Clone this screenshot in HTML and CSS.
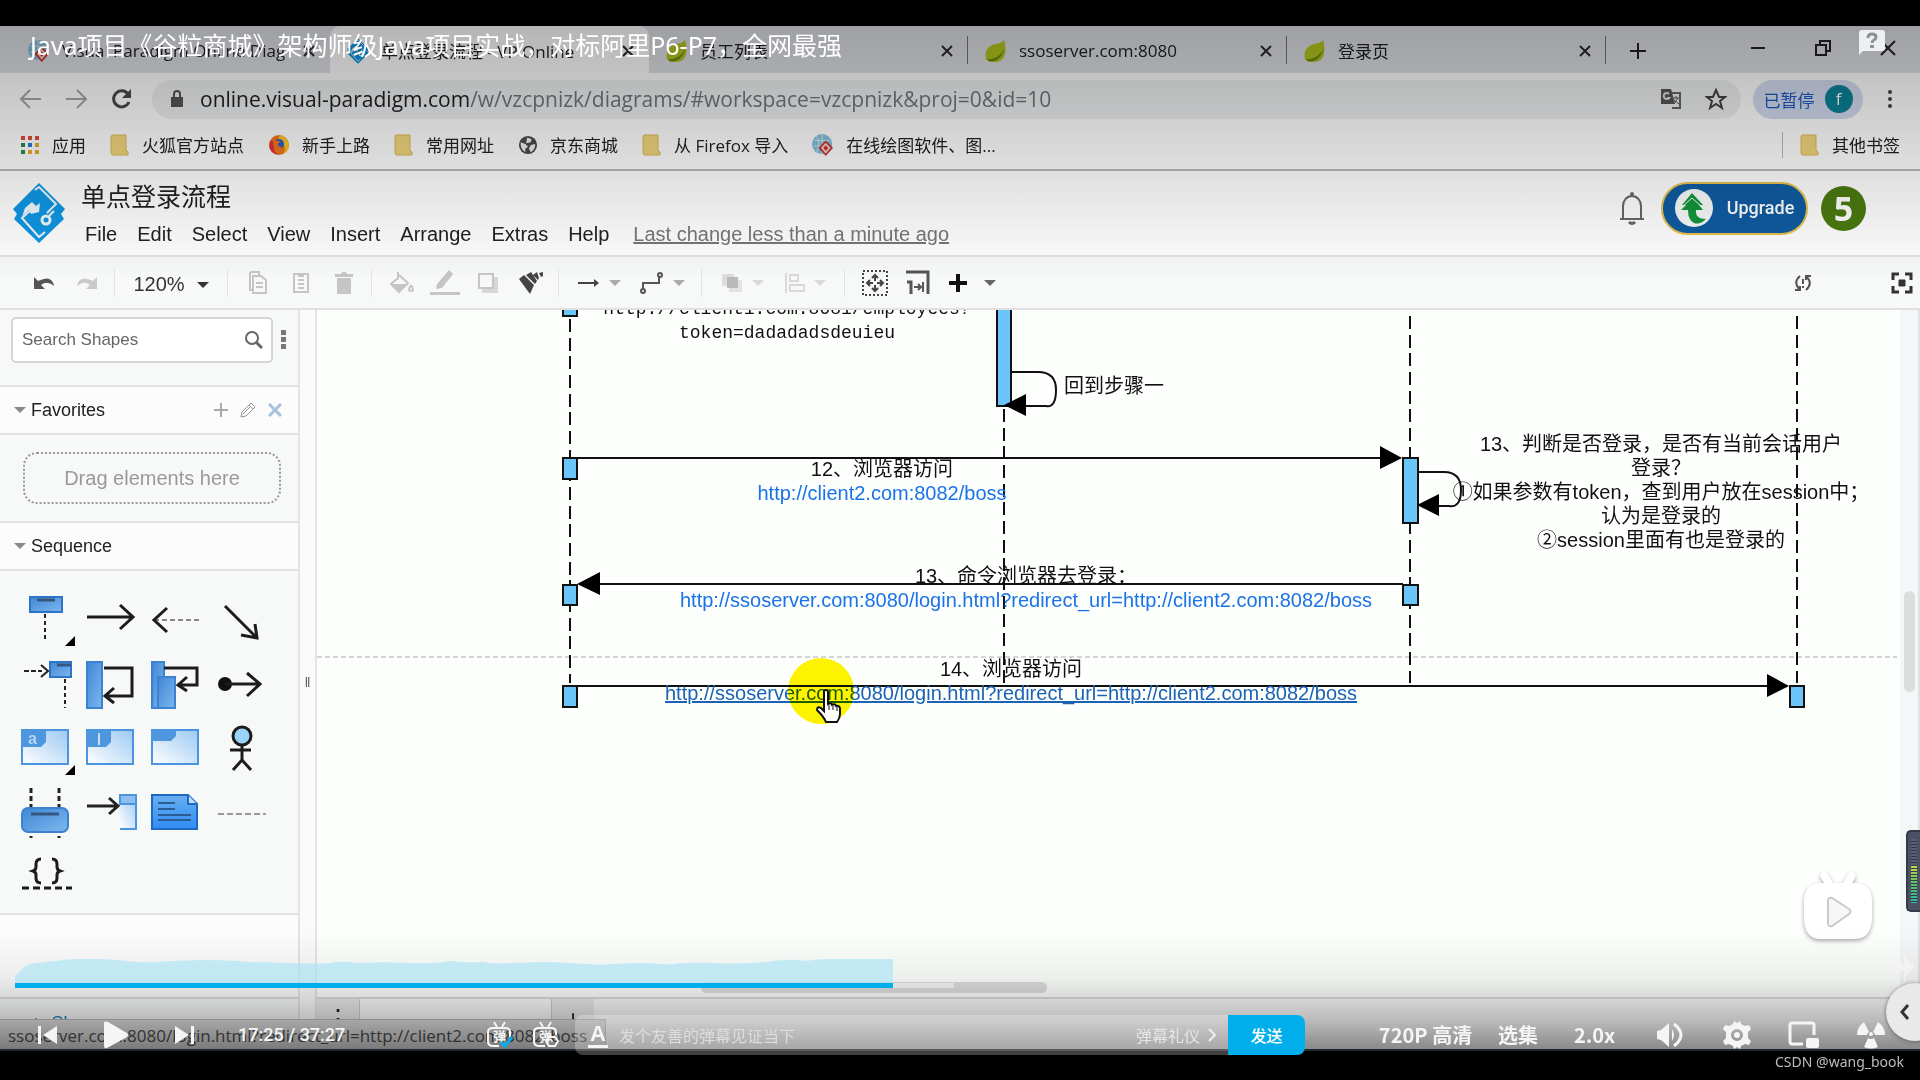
FILE: index.html
```html
<!DOCTYPE html>
<html lang="zh-CN">
<head>
<meta charset="utf-8">
<title>Java项目《谷粒商城》架构师级Java项目实战</title>
<link rel="stylesheet" href="styles.css">
</head>
<body>
<svg class="defs" width="0" height="0" aria-hidden="true">
  <defs>
    <linearGradient id="blue" x1="0" y1="0" x2="1" y2="1"><stop offset="0" stop-color="#3f86d4"/><stop offset="1" stop-color="#7db8ef"/></linearGradient>
    <linearGradient id="pale" x1="0" y1="1" x2="1" y2="0"><stop offset="0" stop-color="#fff"/><stop offset="1" stop-color="#9cc9f2"/></linearGradient>
    <linearGradient id="note" x1="0" y1="0" x2="0" y2="1"><stop offset="0" stop-color="#69aef0"/><stop offset="1" stop-color="#2f8df5"/></linearGradient>
    <symbol id="leaf" viewBox="0 0 24 26"><path d="M21 1c2 10 3 23-9 24H5l-4-3C-1 10 6 6 13 5c4 0 6-2 8-4z" fill="#b4c61c"/><path d="M2 22c9 0 15-4 19-11-3 10-9 14-17 13z" fill="#6a8c10"/></symbol>
    <symbol id="folder" viewBox="0 0 20 22"><path d="M1 3q0-2 2-2h13v15l2 2v3H3q-2 0-2-2z" fill="#f2d67c" stroke="#dcb956"/></symbol>
    <symbol id="vp" viewBox="0 0 24 26"><circle cx="11" cy="12" r="11" fill="#86bfdc"/><path d="M3 8h16M2 14h18M11 1v22M5 3q5 9 0 18" stroke="#d8ecf5" fill="none"/><path d="M15 8l8 8-8 9-8-9z" fill="#c9302c"/><path d="M15 12l4 4-4 5-4-5z" fill="none" stroke="#f5d0cd" stroke-width="2"/></symbol>
    <symbol id="diamond" viewBox="0 0 52 60"><path d="M26 0l26 26-4 5 3 5-25 24L1 36l3-5-4-5z" fill="#0f97e4"/><path d="M22 7l4-3 17 17-9 9M20 25L9 35l17 19 6-5" fill="none" stroke="#eef7fc" stroke-width="2"/><path d="M12 25l7-6 4 4 4-3-1 9-8 2-2-4-7 7" fill="#eef7fc"/><circle cx="33" cy="37" r="4" fill="none" stroke="#eef7fc" stroke-width="3"/><path d="M36 33l5-5" stroke="#eef7fc" stroke-width="2"/></symbol>
    <symbol id="close" viewBox="0 0 16 16"><path d="M3 3l10 10M13 3L3 13" stroke="#2b2b2b" stroke-width="2"/></symbol>
    <symbol id="caret" viewBox="0 0 12 8"><path d="M0 1h12L6 7z" fill="currentColor"/></symbol>
  </defs>
</svg>

<main class="player">
  <section class="screen">
    <nav class="tabs" aria-label="Tabs">
      <div class="tab"><svg class="fav"><use href="#vp"/></svg><span>Visual Paradigm Online Diag</span><button aria-label="Close tab"><svg width="16" height="16"><use href="#close"/></svg></button></div>
      <div class="tab active"><svg class="fav"><use href="#diamond"/></svg><span>单点登录流程 - VP Online</span><button aria-label="Close tab"><svg width="16" height="16"><use href="#close"/></svg></button></div>
      <div class="tab lined"><svg class="fav"><use href="#leaf"/></svg><span>员工列表</span><button aria-label="Close tab"><svg width="16" height="16"><use href="#close"/></svg></button></div>
      <div class="tab lined"><svg class="fav"><use href="#leaf"/></svg><span>ssoserver.com:8080</span><button aria-label="Close tab"><svg width="16" height="16"><use href="#close"/></svg></button></div>
      <div class="tab lined"><svg class="fav"><use href="#leaf"/></svg><span>登录页</span><button aria-label="Close tab"><svg width="16" height="16"><use href="#close"/></svg></button></div>
      <button class="newtab" aria-label="New tab"><svg width="18" height="18"><path d="M9 1v16M1 9h16" stroke="#222" stroke-width="2"/></svg></button>
      <div class="winbtns">
        <button aria-label="Minimize"><svg width="16" height="16"><path d="M1 8h14" stroke="#222" stroke-width="2"/></svg></button>
        <button aria-label="Restore"><svg width="16" height="16"><path d="M1 5h10v10H1zM5 5V1h10v10h-4" fill="none" stroke="#222" stroke-width="2"/></svg></button>
        <button aria-label="Close"><svg width="16" height="16"><path d="M1 1l14 14M15 1L1 15" stroke="#222" stroke-width="2"/></svg></button>
      </div>
    </nav>

    <div class="address">
      <button class="nav" aria-label="Back"><svg width="22" height="20"><path d="M21 10H2M10 1l-9 9 9 9" fill="none" stroke="#a6a7a6" stroke-width="2"/></svg></button>
      <button class="nav" aria-label="Forward"><svg width="22" height="20"><path d="M1 10h19M12 1l9 9-9 9" fill="none" stroke="#a6a7a6" stroke-width="2"/></svg></button>
      <button class="nav" aria-label="Reload"><svg width="22" height="22"><path d="M18 6a8 8 0 1 0 1 8" fill="none" stroke="#4a4a4a" stroke-width="3"/><path d="M21 1v9h-9z" fill="#4a4a4a"/></svg></button>
      <div class="omnibox">
        <svg width="14" height="18"><path d="M1 7h12v10H1z" fill="#555"/><path d="M4 8V4a3 3 0 0 1 6 0v4" fill="none" stroke="#555" stroke-width="2"/></svg>
        <span class="url">online.visual-paradigm.com<i>/w/vzcpnizk/diagrams/#workspace=vzcpnizk&amp;proj=0&amp;id=10</i></span>
        <button aria-label="Translate"><svg width="22" height="22"><path d="M9 5h11v15h-8" fill="none" stroke="#666" stroke-width="2"/><path d="M1 1h10l4 15H1z" fill="#555"/><path d="M9 6a3 3 0 1 0 0 4H7" fill="none" stroke="#ddd" stroke-width="2"/><path d="M13 10h6M16 8v2M18 10l-4 6M14 12l5 4" stroke="#555" fill="none"/></svg></button>
        <button aria-label="Bookmark"><svg width="22" height="22"><path d="M11 2l3 7h6l-5 4 2 7-6-4-6 4 2-7-5-4h6z" fill="none" stroke="#444" stroke-width="2"/></svg></button>
      </div>
      <button class="profile">已暂停<b>f</b></button>
      <button class="kebab" aria-label="Menu"><svg width="6" height="20"><circle cx="3" cy="3" r="2" fill="#444"/><circle cx="3" cy="10" r="2" fill="#444"/><circle cx="3" cy="17" r="2" fill="#444"/></svg></button>
    </div>

    <nav class="bookmarks" aria-label="Bookmarks">
      <a href="#"><svg viewBox="0 0 20 20" width="20" height="20"><path d="M1 1h4v4H1zM8 1h4v4H8zM15 1h4v4h-4z" fill="#e04a3c"/><path d="M1 8h4v4H1z" fill="#2d8b4c"/><path d="M8 8h4v4H8z" fill="#2a77d4"/><path d="M15 8h4v4h-4zM8 15h4v4H8zM15 15h4v4h-4z" fill="#e3ab2a"/><path d="M1 15h4v4H1z" fill="#2d8b4c"/></svg>应用</a>
      <a href="#"><svg width="20" height="22"><use href="#folder"/></svg>火狐官方站点</a>
      <a href="#"><svg viewBox="0 0 22 22" width="22" height="22"><circle cx="11" cy="11" r="10" fill="#f5751c"/><path d="M12 1q9 3 9 11-1 6-6 8 5-7-2-11-4-4-1-8z" fill="#fbc92e"/><path d="M2 7q-3 12 9 14-6-3-5-8l-1-6z" fill="#e5303f"/><circle cx="11" cy="10" r="5" fill="#2b5fc4"/><path d="M5 8q4-3 8 0-3 0-3 3 2 3 5 2-5 5-9 0z" fill="#f5751c"/></svg>新手上路</a>
      <a href="#"><svg width="20" height="22"><use href="#folder"/></svg>常用网址</a>
      <a href="#"><svg viewBox="0 0 22 22" width="20" height="20"><circle cx="11" cy="11" r="10" fill="#4a4b4b"/><path d="M3 8l5 2 3 3-3 2v4q-6-4-5-11zM10 3q3 0 5 2l-1 3-5 1zM14 11l5-1q0 6-5 9l-2-4z" fill="#f0f1f0"/></svg>京东商城</a>
      <a href="#"><svg width="20" height="22"><use href="#folder"/></svg>从 Firefox 导入</a>
      <a href="#"><svg width="22" height="24"><use href="#vp"/></svg>在线绘图软件、图...</a>
      <a href="#" class="other"><svg width="20" height="22"><use href="#folder"/></svg>其他书签</a>
    </nav>

    <header class="app">
      <svg class="logo"><use href="#diamond"/></svg>
      <div class="names">
        <h1>单点登录流程</h1>
        <nav class="menu" aria-label="Menu"><a href="#">File</a><a href="#">Edit</a><a href="#">Select</a><a href="#">View</a><a href="#">Insert</a><a href="#">Arrange</a><a href="#">Extras</a><a href="#">Help</a><a href="#" class="last">Last change less than a minute ago</a></nav>
      </div>
      <div class="account">
        <button aria-label="Notifications"><svg width="28" height="34" fill="none" stroke="#666" stroke-width="2"><path d="M2 28h24M5 28V15a9 10 0 0 1 18 0v13"/><path d="M11 31q3 3 6 0" stroke-width="3"/><circle cx="14" cy="3" r="1"/></svg></button>
        <button class="upgrade"><svg width="38" height="40"><ellipse cx="19" cy="20" rx="19" ry="19" fill="#f8faf9"/><path d="M17 5l11 12h-4l4 5h-7q-1 9 10 9-6 6-12 4-6-3-6-13H6l5-5H7z" fill="#14953b"/><path d="M8 18l9-8 9 8" stroke="#f4f7f5" fill="none"/></svg>Upgrade</button>
        <button class="avatar">5</button>
      </div>
    </header>

    <div class="toolbar">
      <div class="grp g1">
        <button aria-label="Undo"><svg width="22" height="16"><path d="M1 2v12h11L8 10q6-5 13 1-2-12-16-5z" fill="#555"/></svg></button>
        <button aria-label="Redo"><svg width="22" height="16"><path d="M21 2v12H10l4-4Q8 5 1 11 3-1 17 6z" fill="#c9cac9"/></svg></button>
      </div>
      <div class="grp zoom"><button>120% <svg width="12" height="8"><use href="#caret"/></svg></button></div>
      <div class="grp dim">
        <button aria-label="Copy"><svg width="20" height="24" fill="none" stroke="currentColor" stroke-width="2"><path d="M2 1h9v3M2 1v18h3M5 5h8l5 4v13H5zM8 12h7M8 16h7"/></svg></button>
        <button aria-label="Paste"><svg width="18" height="22" fill="none" stroke="currentColor" stroke-width="2"><path d="M2 2h14v18H2zM6 8h6M6 12h6M6 16h6"/><path d="M6 3h6" stroke-width="4"/></svg></button>
        <button aria-label="Delete"><svg width="20" height="24" fill="currentColor"><path d="M1 3h6l1-2h4l1 2h6v3H1zM3 7h14v16H3z"/></svg></button>
      </div>
      <div class="grp dim">
        <button aria-label="Fill colour"><svg width="24" height="24"><path d="M8 1v6l-7 6 8 8 9-9-9-8M21 14q4 6 0 6t0-6" fill="none" stroke="currentColor" stroke-width="2"/><path d="M2 13h15l-8 8z" fill="currentColor"/></svg></button>
        <button aria-label="Line colour"><svg width="30" height="28"><path d="M7 15L19 1l4 4-11 14-6 1zM0 23h30v3H0z" fill="currentColor"/></svg></button>
        <button aria-label="Shadow"><svg width="22" height="22"><path d="M5 5h16v16H5z" fill="#d6d7d6"/><path d="M2 2h14v14H2z" fill="#f7f8f8" stroke="currentColor" stroke-width="2"/></svg></button>
        <button aria-label="Format painter"><svg width="26" height="24"><path d="M1 8l5-4 10 10-4 9zM8 4l5-3 6 9-2 3zM15 4l4-3 2 6-1 2zM21 2l4-1v4l-2 1z" fill="#444"/></svg></button>
      </div>
      <div class="grp pair mid">
        <button aria-label="Connection"><svg width="22" height="12"><path d="M0 6h17" stroke="#444" stroke-width="2"/><path d="M16 2l5 4-5 4z" fill="#444"/></svg><svg width="12" height="8"><use href="#caret"/></svg></button>
        <button aria-label="Waypoints"><svg width="24" height="22" fill="none" stroke="#555" stroke-width="2"><path d="M3 17v-6h16V5"/><circle cx="3" cy="19" r="2"/><circle cx="20" cy="3" r="2"/></svg><svg width="12" height="8"><use href="#caret"/></svg></button>
      </div>
      <div class="grp pair pale">
        <button aria-label="To front"><svg width="22" height="20"><path d="M1 1h12v12H1z" fill="#dcdddc"/><path d="M8 7h13v12H8z" fill="#e2e3e2"/><path d="M6 4h11v11H6z" fill="#b9bab9"/></svg><svg width="12" height="8"><use href="#caret"/></svg></button>
        <button aria-label="Align"><svg width="20" height="20" fill="none" stroke="currentColor" stroke-width="2"><path d="M1 0v20M5 2h8v6H5zM5 12h14v6H5z"/></svg><svg width="12" height="8"><use href="#caret"/></svg></button>
      </div>
      <div class="grp last">
        <button aria-label="Fit"><svg width="26" height="26" fill="none" stroke="#444" stroke-width="2"><path d="M1 1h24v24H1z" stroke-dasharray="2 2"/><path d="M13 5v6M13 15v6M5 13h6M15 13h6M10 8l3-3 3 3M10 18l3 3 3-3M8 10l-3 3 3 3M18 10l3 3-3 3"/></svg></button>
        <button aria-label="Page view"><svg width="24" height="26" fill="none" stroke="#555" stroke-width="3"><path d="M0 2h22v22M1 12h4v12"/><path d="M8 17h6M12 14l3 3-3 3M17 12v10" stroke-width="2"/></svg></button>
        <button class="add" aria-label="Insert"><svg width="20" height="20"><path d="M10 1v18M1 10h18" stroke="#111" stroke-width="4"/></svg><svg width="12" height="8"><use href="#caret"/></svg></button>
      </div>
      <button class="sync" aria-label="Sync"><svg width="18" height="18" fill="none" stroke="#555" stroke-width="2"><path d="M6 2Q-1 8 5 15M1 16h5v-4M12 16q7-6 1-13M17 2h-5v4M9 5v5M9 12v2"/></svg></button>
      <button class="full" aria-label="Full screen"><svg width="22" height="22" fill="none" stroke="#333" stroke-width="3"><path d="M2 8V2h6M14 2h6v6M20 14v6h-6M8 20H2v-6"/><path d="M8 8h6v6H8z" fill="#333" stroke-width="1"/></svg></button>
    </div>

    <div class="work">
      <aside class="sidebar">
        <div class="search">
          <div class="field"><input type="text" placeholder="Search Shapes" aria-label="Search Shapes"><svg width="18" height="18"><circle cx="7" cy="7" r="6" fill="none" stroke="#666" stroke-width="2"/><path d="M11 11l6 6" stroke="#666" stroke-width="3"/></svg></div>
          <button aria-label="More"><svg width="5" height="20"><path d="M0 0h5v5H0zM0 7h5v5H0zM0 14h5v5H0z" fill="#777"/></svg></button>
        </div>
        <h2><svg width="12" height="8"><use href="#caret"/></svg>Favorites
          <span class="tools">
            <button aria-label="Add"><svg width="14" height="14"><path d="M7 0v14M0 7h14" stroke="#aaa" stroke-width="2"/></svg></button>
            <button aria-label="Edit"><svg width="16" height="16"><path d="M1 15l1-5 9-9 4 4-9 9zM9 3l4 4M3 12l8-8" fill="none" stroke="#999"/></svg></button>
            <button aria-label="Remove"><svg width="14" height="14"><path d="M1 1l12 12M13 1L1 13" stroke="#a9c0dd" stroke-width="3"/></svg></button>
          </span>
        </h2>
        <div class="drop"><p>Drag elements here</p></div>
        <h2><svg width="12" height="8"><use href="#caret"/></svg>Sequence</h2>
        <div class="palette">
          <svg viewBox="0 0 64 64"><path d="M16 11h32v15H16z" fill="url(#blue)" stroke="#2b74c8" stroke-width="2"/><path d="M23 14h18" stroke="#34577f" stroke-width="3"/><path d="M31 28v25" stroke="#222" stroke-width="2" stroke-dasharray="4 3"/><path d="M61 50v10H51z"/></svg>
          <svg viewBox="0 0 64 64" class="ln"><path d="M9 31h46M42 19l13 12-13 12"/></svg>
          <svg viewBox="0 0 64 64" class="ln"><path d="M12 34h48" stroke="#888" stroke-width="2" stroke-dasharray="5 3"/><path d="M25 22L12 34l13 12"/></svg>
          <svg viewBox="0 0 64 64" class="ln"><path d="M19 20l31 31M49 38l2 14-16-3"/></svg>
          <svg viewBox="0 0 64 64"><path d="M36 12h21v15H36z" fill="url(#blue)" stroke="#2b74c8" stroke-width="2"/><path d="M43 15h14" stroke="#34577f" stroke-width="3"/><path d="M51 29v29" stroke="#222" stroke-width="2" stroke-dasharray="4 3"/><path d="M10 21h18" stroke="#222" stroke-width="2" stroke-dasharray="5 2"/><path d="M27 15l7 6-7 6" fill="none" stroke="#222" stroke-width="2"/></svg>
          <svg viewBox="0 0 64 64" class="ln"><path d="M9 12h15v46H9z" class="bl"/><path d="M26 18h28v28H28M36 38l-9 8 9 7"/></svg>
          <svg viewBox="0 0 64 64" class="ln"><path d="M10 12h12v46H10z" class="bl"/><path d="M16 27h17v31H16z" class="bl"/><path d="M22 18h33v17H36M45 27l-9 8 9 6"/></svg>
          <svg viewBox="0 0 64 64" class="ln"><circle cx="19" cy="34" r="7" fill="#111" stroke="none"/><path d="M19 34h35M41 23l13 11-13 12"/></svg>
          <svg viewBox="0 0 64 64"><path d="M8 16h46v34H8z" class="fr"/><path d="M8 16h24v12l-5 5H8z" class="tg"/><text x="14" y="30" class="gl">a</text><path d="M61 51v10H51z"/></svg>
          <svg viewBox="0 0 64 64"><path d="M9 16h46v34H9z" class="fr"/><path d="M9 16h24v12l-5 5H9z" class="tg"/><path d="M21 19v12" stroke="#c8e0f7" stroke-width="2"/></svg>
          <svg viewBox="0 0 64 64"><path d="M10 16h46v34H10z" class="fr"/><path d="M10 16h24v6l-5 5H10z" class="tg"/></svg>
          <svg viewBox="0 0 64 64" class="ln"><circle cx="36" cy="22" r="9" fill="#9ad4fa"/><path d="M36 31v16M24 36h21M36 46l-9 10M36 46l9 10"/></svg>
          <svg viewBox="0 0 64 64"><path d="M17 10v50M45 10v50" stroke="#222" stroke-width="3" stroke-dasharray="5 3"/><rect x="8" y="30" width="46" height="24" rx="6" fill="url(#blue)" stroke="#3b82d0" stroke-width="2"/><path d="M17 36h28" stroke="#34577f" stroke-width="3"/></svg>
          <svg viewBox="0 0 64 64"><path d="M42 17h16v34H42" fill="url(#pale)" stroke="#4a94e0" stroke-width="2"/><path d="M42 17h16v9H42z" fill="#8cc0f0" stroke="#4a94e0" stroke-width="2"/><path d="M9 28h31M31 20l9 8-9 8" fill="none" stroke="#222" stroke-width="3"/></svg>
          <svg viewBox="0 0 64 64"><path d="M10 17h36l9 9v25H10z" fill="url(#note)" stroke="#1f69c0" stroke-width="2"/><path d="M46 17v9h9" fill="#c5e0fa" stroke="#1f69c0" stroke-width="2"/><path d="M16 25h17M16 31h17M16 37h33M16 42h33" stroke="#2b5c94" stroke-width="2"/></svg>
          <svg viewBox="0 0 64 64"><path d="M12 36h48" stroke="#999" stroke-width="2" stroke-dasharray="6 3"/></svg>
          <svg viewBox="0 0 64 64" class="ln"><path d="M27 17q-5 0-5 5v3q0 3-3 4 3 1 3 4v3q0 5 5 5M38 17q5 0 5 5v3q0 3 3 4-3 1-3 4v3q0 5-5 5"/><path d="M8 46h50" stroke-dasharray="7 4"/></svg>
        </div>
        <div class="filler"></div>
        <div class="more"><a href="#">+ &nbsp;Shapes...</a></div>
      </aside>
      <div class="gutter">||</div>

      <div class="canvas">
        <div class="sheet">
          <svg class="lines" width="1603" height="688" viewBox="317 310 1603 688">
            <path d="M317 657h1580" stroke="#aaa" stroke-width="1" stroke-dasharray="5 3"/>
            <g stroke="#111" stroke-width="2" stroke-dasharray="13 6 13 5 13 6"><path d="M570 319v364M1004 409v274M1410 316v367M1797 316v367"/></g>
            <g stroke="#111" stroke-width="2" fill="#6cc5f8">
              <path d="M563 300h14v16h-14zM563 458h14v21h-14zM563 585h14v20h-14zM563 686h14v21h-14z"/>
              <path d="M997 300h14v106h-14zM1403 458h15v65h-15zM1403 585h15v20h-15zM1790 686h14v21h-14z"/>
            </g>
            <g stroke="#111" stroke-width="2" fill="none">
              <path d="M578 458h804M598 584h805M578 686h1190"/>
              <path d="M1012 372h26q18 0 18 18t-10 16h-20M1418 472h26q17 0 17 18t-12 16h-10"/>
            </g>
            <path d="M1402 458l-22-12v23zM577 584l23-12v23zM1789 686l-22-12v23zM1004 405l22-11v22zM1417 505l22-11v22z" fill="#000"/>
          </svg>
          <p class="lbl mono at-token">http://client1.com:8081/employees?<br>token=dadadadsdeuieu</p>
          <p class="lbl at-back">回到步骤一</p>
          <p class="lbl at-12">12、浏览器访问<br><a href="#">http://client2.com:8082/boss</a></p>
          <p class="lbl at-check">13、判断是否登录，是否有当前会话用户<br>登录？<br>①如果参数有token，查到用户放在session中；<br>认为是登录的<br>②session里面有也是登录的</p>
          <p class="lbl at-13">13、命令浏览器去登录：<br><a href="#">http://ssoserver.com:8080/login.html?redirect_url=http://client2.com:8082/boss</a></p>
          <p class="lbl at-14">14、浏览器访问<br><a href="#" class="hover">http://ssoserver.com:8080/login.html?redirect_url=http://client2.com:8082/boss</a></p>
          <span class="spot"></span>
          <svg class="hand" width="28" height="34" viewBox="0 0 28 34"><path d="M9 2q3-3 4 1v12q3-2 4 1 3-2 4 1 3-1 4 2v6q0 4-3 8H11q-2-5-9-12 0-4 4-2l3 3z" fill="#fff" stroke="#111" stroke-width="2"/><path d="M14 16v5M18 17v4M22 18v4" stroke="#111"/></svg>
        </div>
        <div class="vbar"><span></span></div>
        <div class="hbar"></div>
        <div class="pages"><span class="cell dots">⋮</span><span class="cell sheet-tab"></span><span class="cell">+</span></div>
      </div>
    </div>
    <div class="status">ssoserver.com:8080/login.html?redirect_url=http://client2.com:8082/boss</div>
  </section>

  <div class="meter"><span></span></div>
  <button class="tv" aria-label="Play"><svg width="72" height="72" viewBox="0 0 72 72"><path d="M20 2q3-3 6 1l5 9h10l5-9q3-4 6-1 3 2 1 5l-3 5h4q15 1 16 16v20q-1 19-16 20H18Q3 68 2 48V28q1-15 16-16h4l-3-5q-2-3 1-5z" fill="#fff"/><path d="M26 30q0-4 4-3l17 11q3 2 0 5L30 55q-4 1-4-3z" fill="#f6f7f6" stroke="#c9cac9" stroke-width="2"/></svg></button>
  <svg class="spark" width="18" height="24"><path d="M9 0v24M11 4l6 6-6 6zM2 6l6 5-7 5" fill="#fff" stroke="#fff" stroke-width="2"/></svg>
  <button class="side" aria-label="Expand"><svg width="10" height="16"><path d="M8 1L2 8l6 7" fill="none" stroke="#333" stroke-width="3"/></svg></button>

  <div class="shade-top"></div>
  <p class="title">Java项目《谷粒商城》架构师级Java项目实战，对标阿里P6-P7，全网最强</p>
  <button class="feedback" aria-label="Feedback"><svg width="26" height="26"><path d="M3 0h20q3 0 3 3v15q0 3-3 3H4l-4 4V3q0-3 3-3z" fill="#eeeff0"/><path d="M9 8q0-4 4-4t4 3q0 2-2 3t-2 3" fill="none" stroke="#8f9092" stroke-width="3"/><path d="M11 15h4v3h-4z" fill="#8f9092"/></svg></button>

  <div class="shade-bottom"></div>
  <div class="progress">
    <svg class="ridge" viewBox="0 0 878 26" preserveAspectRatio="none"><path d="M0 26V18l4-3q6-9 14-10 12-2 24-3 22-4 60-1 30 4 44 2 50-4 86 0 60 2 80 2 14-4 30-1 26-1 50 0 26 2 44-2 20 3 30 1 16 3 36 1 40-2 60 1 24 2 46 0 26-2 46 1 22-4 54-1 24 0 44-2 22-4 40-1 22-3 40-3 28 0 46-4V26z" fill="#a9e3f5" fill-opacity=".65"/></svg>
    <div class="track"><span class="done"></span><span class="buffer"></span></div>
  </div>
  <div class="controls">
    <button class="ic" aria-label="Previous"><svg width="20" height="20"><path d="M0 1h3v18H0zM19 1v18L5 10z" fill="#f4f5f4"/></svg></button>
    <button class="ic" aria-label="Play"><svg width="26" height="28"><path d="M1 1q2-1 4 0l19 11q2 2 0 4L4 27q-3 1-3-2z" fill="#f4f5f4"/></svg></button>
    <button class="ic" aria-label="Next"><svg width="20" height="20"><path d="M17 1h3v18h-3zM1 1v18l14-9z" fill="#f4f5f4"/></svg></button>
    <span class="time">17:25 / 37:27</span>
    <button class="dm" aria-label="Danmaku on"><svg width="28" height="28"><path d="M8 1l3 5M19 1l-3 5M24 16v-5q0-4-5-4H7q-5 0-5 4v9q0 5 5 5h6" fill="none" stroke="#f4f5f4" stroke-width="2"/><text x="7" y="20">弹</text><path d="M15 21l4 4 7-9" fill="none" stroke="#00aeec" stroke-width="3"/></svg></button>
    <button class="dm" aria-label="Danmaku settings"><svg width="28" height="28"><path d="M8 1l3 5M19 1l-3 5M24 14v-3q0-4-5-4H7q-5 0-5 4v9q0 5 5 5h6" fill="none" stroke="#f4f5f4" stroke-width="2"/><text x="7" y="20">弹</text><path d="M17 16h6l3 4-3 5h-6l-3-5z" fill="none" stroke="#f4f5f4" stroke-width="2"/><circle cx="20" cy="20" r="1" fill="#f4f5f4"/></svg></button>
    <div class="send">
      <button class="font" aria-label="Text style">A</button>
      <input type="text" placeholder="发个友善的弹幕见证当下" aria-label="弹幕">
      <a href="#">弹幕礼仪 <svg width="8" height="14"><path d="M1 1l6 6-6 6" fill="none" stroke="#eee" stroke-width="2"/></svg></a>
      <button class="go">发送</button>
    </div>
    <div class="right">
      <button class="tx quality">720P 高清</button>
      <button class="tx list">选集</button>
      <button class="tx speed">2.0x</button>
      <button class="ic" aria-label="Volume"><svg width="28" height="26"><path d="M1 9l4-1 8-7v24l-8-7-4-1zM16 7q4 6 0 12z" fill="#f4f5f4"/><path d="M18 2q14 11 0 22" fill="none" stroke="#f4f5f4" stroke-width="3"/></svg></button>
      <button class="ic" aria-label="Settings"><svg width="28" height="28" viewBox="0 0 28 28"><path fill-rule="evenodd" d="M10 3l1-3 3 2 3-2 1 3 4 2 4-1 2 4-3 3v6l3 3-2 4-4-1-4 2-1 3-3-2-3 2-1-3-4-2-4 1-2-4 3-3v-6L0 8l2-4 4 1zM14 8a6 6 0 1 0 0 12 6 6 0 0 0 0-12z" fill="#f4f5f4"/><circle cx="14" cy="14" r="3" fill="#f4f5f4"/></svg></button>
      <button class="ic" aria-label="Mini player"><svg width="32" height="28"><path d="M26 14V4q0-2-2-2H4Q2 2 2 4v16q0 3 2 3h11" fill="none" stroke="#f4f5f4" stroke-width="3"/><rect x="18" y="17" width="13" height="10" rx="2" fill="#f4f5f4"/></svg></button>
      <button class="ic" aria-label="Full screen"><svg width="30" height="28"><path d="M8 1l5 10q-2 1-2 3H1Q1 6 8 1zM22 1l-5 10q2 1 2 3h10q0-8-7-13zM12 17q3 2 6 0l4 9q-7 3-14 0z" fill="#f4f5f4"/><circle cx="15" cy="13" r="2" fill="#f4f5f4"/></svg></button>
    </div>
  </div>
</main>
<footer class="mark">CSDN @wang_book</footer>
</body>
</html>
```
FILE: styles.css
```css
* { box-sizing: border-box; }
body {
  margin: 0; min-height: 100vh; background: #000; color: #202124;
  display: flex; flex-direction: column; padding-top: 26px;
  font-family: "Open Sans", "Noto Sans CJK SC", sans-serif; font-size: 17px; overflow-x: hidden;
}
button { border: 0; background: none; padding: 0; margin: 0; font: inherit; color: inherit; display: flex; align-items: center; justify-content: center; }
a { color: inherit; text-decoration: none; }
h1, h2, p { margin: 0; font-weight: 400; }
svg { display: block; flex: none; }
.defs { position: absolute; }
.player { flex: 1; position: relative; display: flex; flex-direction: column; }
.screen { flex: 1; display: flex; flex-direction: column; background: #fdfffd; position: relative; overflow: hidden; border-bottom: 2px solid #3b4754; }

/* browser tabs */
.tabs { display: flex; height: 47px; background: #dee1e6; }
.tab { width: 319px; display: flex; align-items: center; padding: 2px 13px 0 17px; border-radius: 0 0 10px 10px; position: relative; }
.tab:first-child { width: 330px; padding-left: 28px; }
.tab span { flex: 1; padding-left: 12px; white-space: nowrap; overflow: hidden; }
.fav { width: 22px; height: 26px; }
.tab.active { background: #fff; border-radius: 10px 10px 0 0; }
.tab.lined::after { content: ""; position: absolute; right: 0; top: 10px; height: 28px; border-right: 1px solid #777; }
.newtab { width: 64px; padding-top: 2px; }
.winbtns { margin-left: auto; display: flex; }
.winbtns button { width: 65px; padding-bottom: 4px; }

/* address bar */
.address { height: 49px; background: #fff; display: flex; align-items: center; padding: 3px 27px 0 8px; }
.nav { width: 45px; height: 40px; }
.omnibox { flex: 1; height: 39px; margin-left: 9px; border-radius: 20px; background: #eef0f1; display: flex; align-items: center; padding: 0 14px 0 18px; gap: 16px; }
.omnibox button + button { margin-left: 7px; }
.url { flex: 1; font-size: 21px; line-height: 26px; white-space: nowrap; }
.url i { font-style: normal; color: #72767a; }
.profile { margin: 0 24px 0 12px; width: 110px; height: 39px; border-radius: 20px; background: #d4dcf0; color: #1a56c4; gap: 10px; }
.profile b { width: 28px; height: 28px; border-radius: 50%; background: #0a8399; color: #fff; font-weight: 400; line-height: 28px; }

/* bookmarks */
.bookmarks { height: 49px; display: flex; align-items: center; gap: 24px; padding: 0 20px 2px; background: #fff; border-bottom: 2px solid #b9bbba; white-space: nowrap; }
.bookmarks a { display: flex; align-items: center; gap: 12px; }
.bookmarks .other { margin-left: auto; border-left: 1px solid #bbb; padding-left: 17px; height: 26px; }

/* application header */
.app { height: 86px; display: flex; align-items: center; padding-right: 54px; border-bottom: 2px solid #e2e3e2; background: #fefffe; font-family: "Liberation Sans", "Noto Sans CJK SC", sans-serif; }
.logo { width: 52px; height: 60px; margin: 0 16px 0 13px; }
.names { flex: 1; }
.names h1 { font-size: 25px; line-height: 36px; padding-top: 4px; }
.menu { display: flex; gap: 20px; font-size: 20px; line-height: 36px; padding: 1px 0 0 4px; white-space: nowrap; }
.menu .last { color: #777; margin-left: 4px; text-decoration: underline; }
.account { display: flex; align-items: center; padding-bottom: 10px; }
.upgrade { width: 147px; height: 53px; border-radius: 27px; border: 2px solid #e8c14c; background: #0f5ca2; color: #fff; font: 500 18px/24px Roboto, sans-serif; gap: 14px; margin: 0 13px 0 15px; }
.avatar { width: 45px; height: 45px; border-radius: 50%; background: #4b7a10; color: #fff; font: 700 34px/45px "Noto Sans", sans-serif; }

/* toolbar */
.toolbar { height: 53px; display: flex; align-items: center; background: #f7f8f8; border-bottom: 2px solid #dfe0df; font-family: "Liberation Sans", sans-serif; font-size: 20px; }
.grp { display: flex; padding: 0 6px 0 8px; border-right: 1px solid #e3e4e3; height: 28px; color: #666; }
.grp button { width: 43px; gap: 9px; }
.g1 { padding-left: 22px; }
.zoom { padding: 4px 20px 0; }
.zoom button { width: 72px; color: #333; gap: 12px; }
.dim { color: #c4c5c4; }
.pair { padding: 0 7px 0 9px; }
.pair button { width: 63px; }
.mid { color: #aaa; }
.pale { color: #d8d9d8; }
.grp.last { border: 0; }
.grp .add { width: 66px; gap: 16px; }
.sync { margin-left: auto; width: 60px; }
.full { width: 36px; margin-left: 51px; }

/* workspace */
.work { flex: 1; display: flex; min-height: 0; font-family: "Liberation Sans", "Noto Sans CJK SC", sans-serif; }
.sidebar { width: 298px; display: flex; flex-direction: column; background: #f7f8f8; }
.search { height: 75px; display: flex; padding: 7px 12px 0 11px; gap: 8px; align-items: flex-start; }
.field { flex: 1; height: 46px; border: 2px solid #d4d5d4; border-radius: 5px; background: #fff; display: flex; align-items: center; padding: 0 8px 0 9px; }
.field input { flex: 1; min-width: 0; border: 0; padding: 0; background: none; outline: 0; font: 17px/24px "Liberation Sans", sans-serif; }
.field input::placeholder { color: #666; opacity: 1; }
.search button { height: 46px; }
.sidebar h2 { height: 50px; border: solid #e0e1e0; border-width: 2px 0; background: #fbfcfb; display: flex; align-items: center; font-size: 18px; padding: 0 16px 0 14px; gap: 5px; }
.sidebar h2 > svg { color: #888; }
.tools { margin-left: auto; display: flex; gap: 12px; }
.drop { height: 86px; padding: 17px 17px 0 23px; }
.drop p { height: 52px; border: 2px dotted #999; border-radius: 14px; text-align: center; line-height: 48px; font-size: 20px; color: #999; }
.palette { display: grid; grid-template-columns: repeat(4, 64px); padding: 15px 14px 7px; border-bottom: 2px solid #e0e1e0; }
.palette svg { width: 64px; height: 64px; }
.ln { fill: none; stroke: #1c1c1c; stroke-width: 3; }
.bl { fill: url(#blue); stroke: #3b82d0; stroke-width: 2; }
.fr { fill: url(#pale); stroke: #4a94e0; stroke-width: 2; }
.tg { fill: #4e96de; }
.gl { font: 700 16px "Liberation Sans", sans-serif; fill: #b4d5f5; }
.filler { flex: 1; background: #fbfcfb; }
.more { height: 52px; border-top: 2px solid #d9dad9; background: #f7f8f8; padding: 14px 0 0 31px; font-size: 18px; color: #1b83a8; }
.gutter { width: 19px; border: solid #e3e4e3; border-width: 0 2px; background: #f9faf9; font-size: 10px; display: flex; justify-content: center; padding-top: 366px; }
.canvas { flex: 1; min-width: 0; display: flex; flex-direction: column; position: relative; overflow: hidden; }
.sheet { flex: 1; position: relative; min-height: 0; }
.lines { position: absolute; left: 0; top: 0; }
.lbl { position: absolute; font-size: 20px; line-height: 24px; text-align: center; white-space: nowrap; transform: translateX(-50%); color: #111; }
.lbl a { color: #1a73e8; }
.lbl a.hover { color: #1c62b5; text-decoration: underline; }
.mono { font-family: "Liberation Mono", monospace; font-size: 18px; }
.at-token { left: 470px; top: -13px; }
.at-back { left: 797px; top: 64px; }
.at-12 { left: 565px; top: 147px; }
.at-check { left: 1344px; top: 122px; }
.at-13 { left: 709px; top: 254px; }
.at-14 { left: 694px; top: 347px; }
.spot { position: absolute; left: 471px; top: 348px; width: 66px; height: 66px; border-radius: 50%; background: #fff200; mix-blend-mode: multiply; }
.hand { position: absolute; left: 498px; top: 379px; }
.vbar { position: absolute; right: 0; top: 0; bottom: 54px; width: 20px; background: #f5f6f7; border-right: 2px solid #e0e1e2; }
.vbar span { position: absolute; left: 4px; top: 281px; width: 11px; height: 101px; border-radius: 6px; background: #dcdddd; }
.hbar { position: absolute; left: 384px; bottom: 56px; width: 346px; height: 11px; border-radius: 6px; background: #dcdddc; }
.pages { height: 52px; border-top: 2px solid #d9dad9; display: flex; background: #f8f9f8; }
.cell { width: 42px; background: #e9eae9; text-align: center; font-size: 26px; line-height: 40px; }
.cell.sheet-tab { width: 193px; background: #fbfcfb; border: solid #ccc; border-width: 0 1px; }
.status { position: absolute; left: 0; bottom: 0; width: 606px; height: 30px; background: #dcdddc; border-top: 1px solid #bbb; border-right: 1px solid #bbb; color: #4d4f50; padding-left: 8px; line-height: 32px; white-space: nowrap; }

/* floating pieces */
.meter { position: absolute; right: 0; top: 804px; width: 14px; height: 82px; background: #4b5163; border-radius: 5px 0 0 5px; border: 2px solid #333a4a; border-right: 0; padding: 7px 3px; }
.meter span { display: block; height: 64px; background: repeating-linear-gradient(transparent 0 2px, #323949 2px 3px), linear-gradient(#596073 40%, #d8d83c 40%, #58c060 70%, #2fb6a8); }
.tv { position: absolute; right: 46px; top: 845px; filter: drop-shadow(0 2px 2px #aaa); }
.spark { position: absolute; right: 6px; top: 931px; }
.side { position: absolute; right: -24px; top: 957px; width: 58px; height: 58px; border-radius: 50%; background: #e8e9e8; box-shadow: 0 1px 4px #666; padding-right: 20px; z-index: 3; }
.shade-top { position: absolute; inset: 0 0 auto; height: 254px; background: linear-gradient(rgba(0,0,0,.29), transparent); pointer-events: none; }
.shade-bottom { position: absolute; inset: auto 0 0; height: 121px; background: linear-gradient(transparent, rgba(0,0,0,.06) 38%, rgba(0,0,0,.15) 58%, rgba(0,0,0,.25) 75%, rgba(0,0,0,.46)); pointer-events: none; }
.title { position: absolute; left: 30px; top: 1px; font: 25px/36px "Noto Sans", "Noto Sans CJK SC", sans-serif; color: #fff; white-space: nowrap; }
.feedback { position: absolute; right: 35px; top: 4px; }

/* player controls */
.progress { position: absolute; left: 15px; right: 15px; bottom: 63px; }
.ridge { width: 878px; height: 24px; }
.track { display: flex; height: 5px; }
.done { width: 878px; background: #00aeec; }
.buffer { width: 61px; background: rgba(255,255,255,.4); }
.controls { position: absolute; left: 0; right: 0; bottom: -4px; height: 40px; display: flex; align-items: center; padding-left: 14px; color: #f4f5f4; z-index: 2; }
.controls .ic { width: 68px; height: 40px; }
.time { width: 259px; padding-left: 20px; font: 500 18px/24px Roboto, sans-serif; }
.dm { width: 46px; }
.dm text { font: 700 13px "Noto Sans CJK SC", sans-serif; fill: #f4f5f4; }
.send { flex: 1; height: 40px; margin-left: 6px; display: flex; align-items: center; background: rgba(255,255,255,.25); border-radius: 8px; overflow: hidden; }
.font { width: 20px; height: 26px; margin: 0 11px 0 13px; border-bottom: 3px solid #f4f5f4; font: 700 22px/22px "Liberation Sans", sans-serif; }
.send input { flex: 1; min-width: 0; border: 0; padding: 0; outline: 0; background: none; color: #fff; font: 16px/24px "Noto Sans CJK SC", sans-serif; }
.send input::placeholder { color: #ddd; opacity: 1; }
.send a { display: flex; align-items: center; gap: 8px; margin-right: 12px; font: 16px/24px "Noto Sans CJK SC", sans-serif; color: #e6e6e6; }
.go { width: 77px; height: 40px; background: #00aeec; color: #fff; font: 500 16px/24px "Noto Sans CJK SC", sans-serif; }
.right { width: 615px; display: flex; align-items: center; padding-left: 74px; }
.tx { font: 700 20px/28px "Noto Sans CJK SC", sans-serif; white-space: nowrap; }
.quality { width: 93px; }
.list { width: 92px; }
.speed { width: 72px; justify-content: flex-start; padding-left: 10px; }
.right .ic { width: 67px; }
.mark { height: 29px; padding-right: 16px; color: #bdbdbd; font: 14px/22px "Noto Sans", sans-serif; text-align: right; }
```
